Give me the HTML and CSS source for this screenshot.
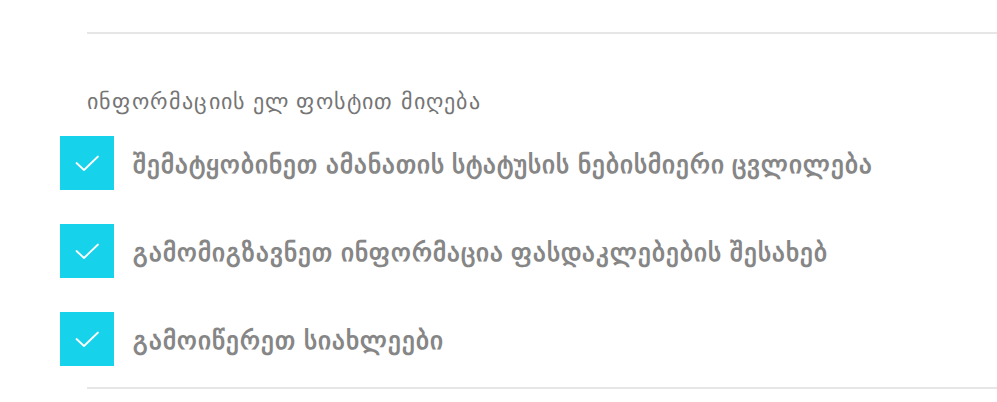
FILE: index.html
```html
<!DOCTYPE html>
<html lang="ka">
<head>
<meta charset="utf-8">
<link rel="stylesheet" href="styles.css">
</head>
<body>
<div class="panel">
  <div class="rule"></div>
  <div class="title">ინფორმაციის ელ ფოსტით მიღება</div>
  <ul class="options">
    <li class="option">
      <span class="box"><svg viewBox="0 0 54 54" width="54" height="54"><path d="M16.5 27 L24 34 L38 20.5" fill="none" stroke="#fff" stroke-width="1.8" stroke-linecap="round" stroke-linejoin="round"/></svg></span>
      <span class="label">შემატყობინეთ ამანათის სტატუსის ნებისმიერი ცვლილება</span>
    </li>
    <li class="option">
      <span class="box"><svg viewBox="0 0 54 54" width="54" height="54"><path d="M16.5 27 L24 34 L38 20.5" fill="none" stroke="#fff" stroke-width="1.8" stroke-linecap="round" stroke-linejoin="round"/></svg></span>
      <span class="label">გამომიგზავნეთ ინფორმაცია ფასდაკლებების შესახებ</span>
    </li>
    <li class="option">
      <span class="box"><svg viewBox="0 0 54 54" width="54" height="54"><path d="M16.5 27 L24 34 L38 20.5" fill="none" stroke="#fff" stroke-width="1.8" stroke-linecap="round" stroke-linejoin="round"/></svg></span>
      <span class="label">გამოიწერეთ სიახლეები</span>
    </li>
  </ul>
  <div class="rule bottom"></div>
</div>
</body>
</html>
```
FILE: styles.css
```css
html, body {
  margin: 0;
  padding: 0;
  background: #ffffff;
}
body {
  font-family: "Noto Sans", sans-serif;
}
.panel {
  padding: 32px 0 0 60px;
}
.rule {
  margin-left: 27px;
  height: 2px;
  background: #e6e6e6;
}
.title {
  margin: 54px 0 0 27px;
  font-size: 22px;
  line-height: 24px;
  letter-spacing: 1.2px;
  color: #757575;
}
.options {
  list-style: none;
  margin: 24px 0 0 0;
  padding: 0;
  display: flex;
  flex-direction: column;
  gap: 34px;
}
.option {
  display: flex;
  align-items: center;
  gap: 19px;
  height: 54px;
}
.box {
  width: 54px;
  height: 54px;
  background: #16d2ea;
  display: block;
  flex: none;
}
.box svg {
  display: block;
}
.label {
  font-size: 25px;
  font-weight: bold;
  letter-spacing: 1px;
  color: #868686;
}
.rule.bottom {
  margin-top: 21px;
}
```
